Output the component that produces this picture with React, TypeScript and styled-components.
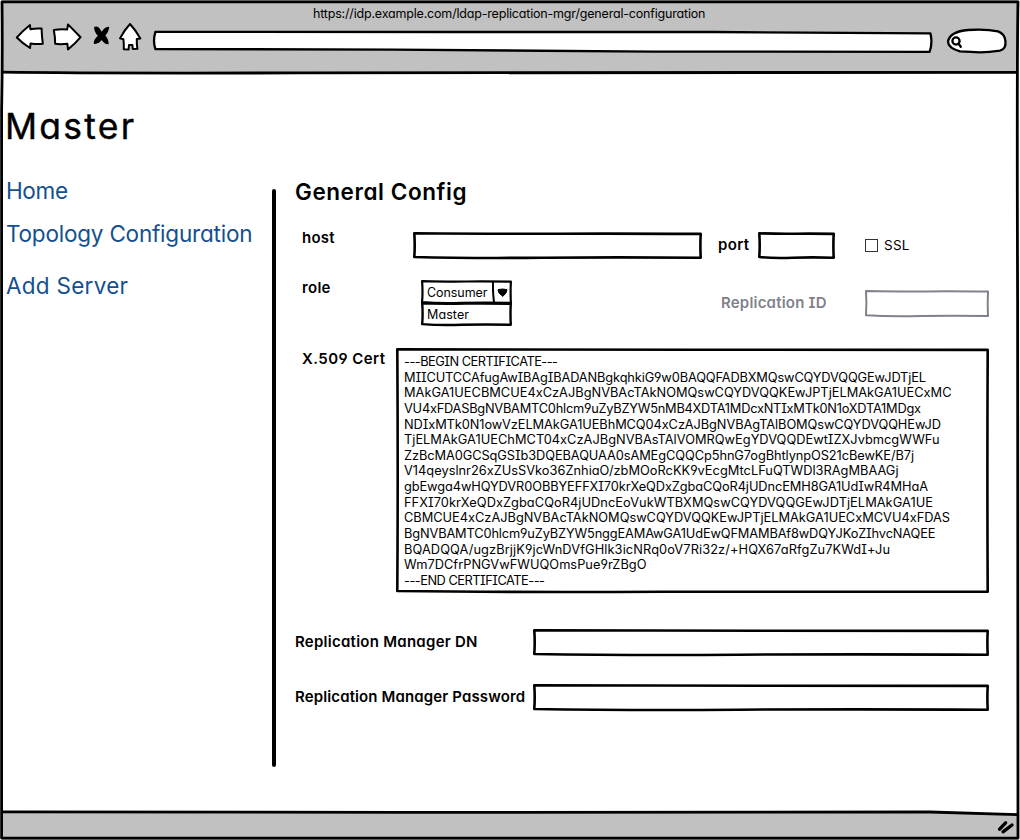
import React, { useLayoutEffect, useRef, useState } from "react";
import styled, { createGlobalStyle } from "styled-components";

const INK = "#000";
const CHROME = "#c1c1c1";
const LINK = "#144f8f";
const MUTED = "#81818b";

const GlobalStyle = createGlobalStyle`
  *, *::before, *::after { box-sizing: border-box; }
  body {
    margin: 0;
    background: #fff;
    color: ${INK};
    font-family: Inter, Lato, sans-serif;
    font-feature-settings: "cv11", "cv08", "cv04";
  }
`;

/* ---------- text tracked out to a given measure ---------- */

const Run = styled.span`
  display: inline-block;
  white-space: pre;
`;

function Tracked({ measure, children }: { measure: number; children: string }) {
  const ref = useRef<HTMLSpanElement>(null);
  const [spacing, setSpacing] = useState(0);
  useLayoutEffect(() => {
    const el = ref.current;
    if (!el) return;
    el.style.letterSpacing = "0px";
    const natural = el.getBoundingClientRect().width;
    setSpacing((measure - natural) / (children.length - 1));
  }, [measure, children]);
  return (
    <Run ref={ref} style={{ letterSpacing: `${spacing}px` }}>
      {children}
    </Run>
  );
}

/* ---------- hand-drawn outline ---------- */

const Outline = styled.svg`
  position: absolute;
  inset: 0;
  overflow: visible;
  pointer-events: none;
`;

const BoxShell = styled.div<{ $w: number; $h: number; $top: number }>`
  position: relative;
  flex: none;
  width: ${(p) => p.$w}px;
  height: ${(p) => p.$h}px;
  margin-top: ${(p) => p.$top}px;
`;

type SketchBoxProps = {
  w: number;
  h: number;
  top?: number;
  color?: string;
  stroke?: number;
  children?: React.ReactNode;
};

function SketchBox({ w, h, top = 0, color = INK, stroke = 2.6, children }: SketchBoxProps) {
  const a = stroke / 2;
  const r = w - a;
  const b = h - a;
  const d = `M${a} ${a} Q${w * 0.3} ${a + 0.7} ${w * 0.5} ${a + 0.4} T${r} ${a + 0.6}
    Q${r - 0.6} ${h / 2} ${r} ${b}
    Q${w * 0.7} ${b - 0.7} ${w * 0.45} ${b} T${a} ${b - 0.7}
    Q${a + 0.8} ${h / 2} ${a} ${a}Z`;
  return (
    <BoxShell $w={w} $h={h} $top={top}>
      <Outline width={w} height={h}>
        <path d={d} fill="#fff" stroke={color} strokeWidth={stroke} strokeLinejoin="round" />
      </Outline>
      {children}
    </BoxShell>
  );
}

/* ---------- browser window ---------- */

const Window = styled.div`
  position: relative;
  display: flex;
  flex-direction: column;
  width: 1020px;
  height: 840px;
  overflow: hidden;
`;

const Header = styled.header`
  height: 73px;
  margin: 0 2px 0 2px;
  padding-top: 3px;
  background: ${CHROME};
`;

const Address = styled.div`
  height: 19px;
  padding-left: 311px;
  font-size: 12.5px;
  line-height: 22px;
`;

const Toolbar = styled.div`
  display: flex;
  align-items: flex-start;
  padding-left: 13px;
`;

const Glyph = styled.svg<{ $left?: number; $top?: number }>`
  flex: none;
  margin: ${(p) => p.$top ?? 0}px 0 0 ${(p) => p.$left ?? 0}px;
  overflow: visible;
  stroke: ${INK};
  stroke-width: 2;
  stroke-linejoin: round;
  stroke-linecap: round;
  fill: #fff;
`;

const CloseGlyph = styled(Glyph)`
  fill: ${INK};
  stroke-width: 1.4;
`;

const GripGlyph = styled(Glyph)`
  stroke-width: 3.4;
`;

const BarGlyph = styled(Glyph)`
  stroke-width: 2.3;
`;

const Footer = styled.footer`
  height: 27px;
  margin: 0 2px;
  padding: 6px 3px 0 0;
  display: flex;
  justify-content: flex-end;
  background: ${CHROME};
`;

function Chrome() {
  return (
    <Header>
      <Address>
        <Tracked measure={392.5}>https://idp.example.com/ldap-replication-mgr/general-configuration</Tracked>
      </Address>
      <Toolbar>
        <Glyph width="30" height="30">
          <path d="M1.8 15.5 Q8 8.5 15 3 L15.4 7.2 Q20 6.2 26.6 6.6 Q26.8 14 27.8 21.8 Q21 22.4 15.6 21.4 L15 26 Q8 21.8 1.8 15.5Z" />
        </Glyph>
        <Glyph width="30" height="30" $left={6}>
          <path d="M2.8 8 Q9 6.8 16.2 7.4 L17 2.4 Q23.5 9 29.6 15.2 Q24 22 17 27.4 L16.4 21.8 Q9 22.6 4.2 21.8 Q4.2 15 2.8 8Z" />
        </Glyph>
        <CloseGlyph width="18" height="22" $left={12} $top={4}>
          <path d="M1.8 1.4 Q5 .2 7 4.4 Q8.5 6.9 9.2 6.4 Q11.5 1.9 15.6 1.4 Q15 5.6 11.6 9.6 Q15 13.4 15 17.5 Q11.5 17.5 8.8 12.9 Q5.5 17.4 1.4 17.2 Q1.5 13.4 5.8 10 Q2 6 1.8 1.4Z" />
        </CloseGlyph>
        <Glyph width="23" height="30" $left={8}>
          <path d="M11 2 Q16.5 8 21.4 16.4 L17.8 17 Q17.6 22 18.4 26.8 L13.8 27 L13.4 23 L10 23 L9.6 27.4 L4.8 27.2 Q5 22 4.4 17.2 L1 16.4 Q5 8.5 11 2Z" />
        </Glyph>
        <BarGlyph width="779" height="24" $left={11} $top={9}>
          <path d="M2.4 .8 L300 1 L560 1 Q670 2 777.4 2.4 Q779.8 12 776.6 20.8 L500 20.6 Q350 19.6 240 18.6 L2.4 18 Q-.4 10 2.4 .8Z" />
        </BarGlyph>
        <BarGlyph width="61" height="28" $left={14} $top={6}>
          <path d="M2 13.5 Q4 3.5 22 2 Q40 .8 52 3.4 Q59 6 59.4 13 Q60.4 21 54 22.6 Q37 25.2 25 23.8 L14 23.4 Q2 20 2 13.5Z" />
          <circle cx="10" cy="13" r="3.6" />
          <path d="M12.6 15.8 L14.8 18.8" />
        </BarGlyph>
      </Toolbar>
    </Header>
  );
}

function Frame() {
  return (
    <Outline width="1020" height="840" viewBox="0 0 1020 840">
      <g fill="none" stroke={INK} strokeWidth="2.8" strokeLinejoin="round">
        <path d="M2 1.8 L500 1.8 L1018 1.8 Q1016.8 60 1017.6 300 L1018 838 L500 838.2 L1.6 838 L1.6 110 Q2.6 60 2 1.8Z" />
        <path d="M2 72.2 Q90 73.4 300 72.9 L1017 72.3" />
        <path d="M2 811.8 L400 812.4 L930 812 Q975 813.4 1017 814.6" />
      </g>
    </Outline>
  );
}

/* ---------- page ---------- */

const Page = styled.main`
  flex: 1;
  display: flex;
  flex-direction: column;
  background: #fff;
`;

const Title = styled.h1`
  margin: 32px 0 0 5px;
  height: 71px;
  font-size: 35.5px;
  line-height: 44px;
  font-weight: 400;
  -webkit-text-stroke: 0.4px ${INK};
`;

const Columns = styled.div`
  display: flex;
  align-items: flex-start;
`;

const Sidebar = styled.nav`
  width: 272px;
  padding-left: 6px;
  display: flex;
  flex-direction: column;
`;

const NavLink = styled.a<{ $gap?: number }>`
  margin-top: ${(p) => p.$gap ?? 0}px;
  color: ${LINK};
  font-size: 22.5px;
  line-height: 30px;
`;

const Divider = styled.div`
  width: 4px;
  height: 578px;
  margin-top: 13px;
  border-radius: 2px;
  background: ${INK};
`;

const Form = styled.section`
  margin-left: 19px;
  width: 700px;
  display: flex;
  flex-direction: column;
`;

const Heading = styled.h2`
  margin: 0;
  height: 56px;
  font-size: 22.5px;
  line-height: 32px;
  font-weight: 600;
`;

const Row = styled.div<{ $h: number; $indent?: number }>`
  display: flex;
  align-items: flex-start;
  height: ${(p) => p.$h}px;
  padding-left: ${(p) => p.$indent ?? 0}px;
`;

const Label = styled.label<{ $w: number; $top?: number; $muted?: boolean }>`
  flex: none;
  width: ${(p) => p.$w}px;
  margin-top: ${(p) => p.$top ?? 0}px;
  font-size: 15px;
  line-height: 20px;
  font-weight: 600;
  color: ${(p) => (p.$muted ? MUTED : INK)};
`;

const Space = styled.div<{ $w: number }>`
  flex: none;
  width: ${(p) => p.$w}px;
`;

const Check = styled.span`
  flex: none;
  width: 13px;
  height: 13px;
  margin: 7px 6px 0 0;
  border: 1px solid #333;
`;

const CheckLabel = styled.label`
  margin-top: 3px;
  font-size: 13.5px;
  line-height: 20px;
`;

const Dropdown = styled.div`
  display: flex;
  flex-direction: column;
  margin-top: -2px;
`;

const Option = styled.div`
  position: relative;
  display: flex;
  align-items: center;
  height: 100%;
  padding-left: 6px;
  font-size: 12.5px;
`;

const Arrow = styled.svg`
  position: absolute;
  right: 0;
  top: 0;
`;

const CertText = styled.div`
  position: relative;
  padding: 6px 0 0 8px;
  font-size: 12.8px;
  line-height: 15.65px;
`;

const CertLine = styled.div`
  height: 15.65px;
`;

const certificate: [string, number][] = [
  ["---BEGIN CERTIFICATE---", 154],
  ["MIICUTCCAfugAwIBAgIBADANBgkqhkiG9w0BAQQFADBXMQswCQYDVQQGEwJDTjEL", 522],
  ["MAkGA1UECBMCUE4xCzAJBgNVBAcTAkNOMQswCQYDVQQKEwJPTjELMAkGA1UECxMC", 547.5],
  ["VU4xFDASBgNVBAMTC0hlcm9uZyBZYW5nMB4XDTA1MDcxNTIxMTk0N1oXDTA1MDgx", 517],
  ["NDIxMTk0N1owVzELMAkGA1UEBhMCQ04xCzAJBgNVBAgTAlBOMQswCQYDVQQHEwJD", 537],
  ["TjELMAkGA1UEChMCT04xCzAJBgNVBAsTAlVOMRQwEgYDVQQDEwtIZXJvbmcgWWFu", 535.5],
  ["ZzBcMA0GCSqGSIb3DQEBAQUAA0sAMEgCQQCp5hnG7ogBhtlynpOS21cBewKE/B7j", 510],
  ["V14qeyslnr26xZUsSVko36ZnhiaO/zbMOoRcKK9vEcgMtcLFuQTWDl3RAgMBAAGj", 494.5],
  ["gbEwga4wHQYDVR0OBBYEFFXI70krXeQDxZgbaCQoR4jUDncEMH8GA1UdIwR4MHaA", 524],
  ["FFXI70krXeQDxZgbaCQoR4jUDncEoVukWTBXMQswCQYDVQQGEwJDTjELMAkGA1UE", 529],
  ["CBMCUE4xCzAJBgNVBAcTAkNOMQswCQYDVQQKEwJPTjELMAkGA1UECxMCVU4xFDAS", 546],
  ["BgNVBAMTC0hlcm9uZyBZYW5nggEAMAwGA1UdEwQFMAMBAf8wDQYJKoZIhvcNAQEE", 531.5],
  ["BQADQQA/ugzBrjjK9jcWnDVfGHlk3icNRq0oV7Ri32z/+HQX67aRfgZu7KWdI+Ju", 486],
  ["Wm7DCfrPNGVwFWUQOmsPue9rZBgO", 242.5],
  ["---END CERTIFICATE---", 141],
];

export default function App() {
  return (
    <>
      <GlobalStyle />
      <Window>
        <Chrome />
        <Page>
          <Title>
            <Tracked measure={129}>Master</Tracked>
          </Title>
          <Columns>
            <Sidebar>
              <NavLink>
                <Tracked measure={62}>Home</Tracked>
              </NavLink>
              <NavLink $gap={13}>
                <Tracked measure={246.5}>Topology Configuration</Tracked>
              </NavLink>
              <NavLink $gap={22}>
                <Tracked measure={122}>Add Server</Tracked>
              </NavLink>
            </Sidebar>
            <Divider />
            <Form>
              <Heading>
                <Tracked measure={171.5}>General Config</Tracked>
              </Heading>
              <Row $h={50} $indent={7}>
                <Label $w={111} $top={-4}>
                  <Tracked measure={32.5}>host</Tracked>
                </Label>
                <SketchBox w={289} h={27} />
                <Space $w={16} />
                <Label $w={40} $top={3}>
                  <Tracked measure={31}>port</Tracked>
                </Label>
                <SketchBox w={77} h={27} />
                <Space $w={30} />
                <Check />
                <CheckLabel>
                  <Tracked measure={25.5}>SSL</Tracked>
                </CheckLabel>
              </Row>
              <Row $h={66} $indent={7}>
                <Label $w={119} $top={-4}>
                  <Tracked measure={28.5}>role</Tracked>
                </Label>
                <Dropdown>
                  <SketchBox w={91} h={24} stroke={2.2}>
                    <Option>
                      <Tracked measure={60.5}>Consumer</Tracked>
                      <Arrow width="20" height="24">
                        <path d="M1 1 Q.6 12 2 22" stroke={INK} strokeWidth="2" fill="none" />
                        <path d="M6 9.6 Q10.5 8.4 15 9.6 L14 13 L10.8 16.4 L7 13Z" stroke={INK} />
                      </Arrow>
                    </Option>
                  </SketchBox>
                  <SketchBox w={91} h={24} top={-2} stroke={2.4}>
                    <Option>
                      <Tracked measure={42}>Master</Tracked>
                    </Option>
                  </SketchBox>
                </Dropdown>
                <Space $w={209} />
                <Label $w={144} $top={11} $muted>
                  <Tracked measure={105.5}>Replication ID</Tracked>
                </Label>
                <SketchBox w={124} h={27} top={8} color={MUTED} stroke={2} />
              </Row>
              <Row $h={281} $indent={7}>
                <Label $w={94} $top={1}>
                  <Tracked measure={83}>X.509 Cert</Tracked>
                </Label>
                <SketchBox w={593} h={245}>
                  <CertText>
                    {certificate.map(([line, measure], i) => (
                      <CertLine key={i}>
                        <Tracked measure={measure}>{line}</Tracked>
                      </CertLine>
                    ))}
                  </CertText>
                </SketchBox>
              </Row>
              <Row $h={55}>
                <Label $w={238} $top={3}>
                  <Tracked measure={182.5}>Replication Manager DN</Tracked>
                </Label>
                <SketchBox w={456} h={27} />
              </Row>
              <Row $h={55}>
                <Label $w={238} $top={3}>
                  <Tracked measure={230}>Replication Manager Password</Tracked>
                </Label>
                <SketchBox w={456} h={27} />
              </Row>
            </Form>
          </Columns>
        </Page>
        <Footer>
          <GripGlyph width="18" height="16">
            <path d="M2.6 10.2 L8.6 3.8 M6 12.8 L15 6" />
          </GripGlyph>
        </Footer>
        <Frame />
      </Window>
    </>
  );
}
